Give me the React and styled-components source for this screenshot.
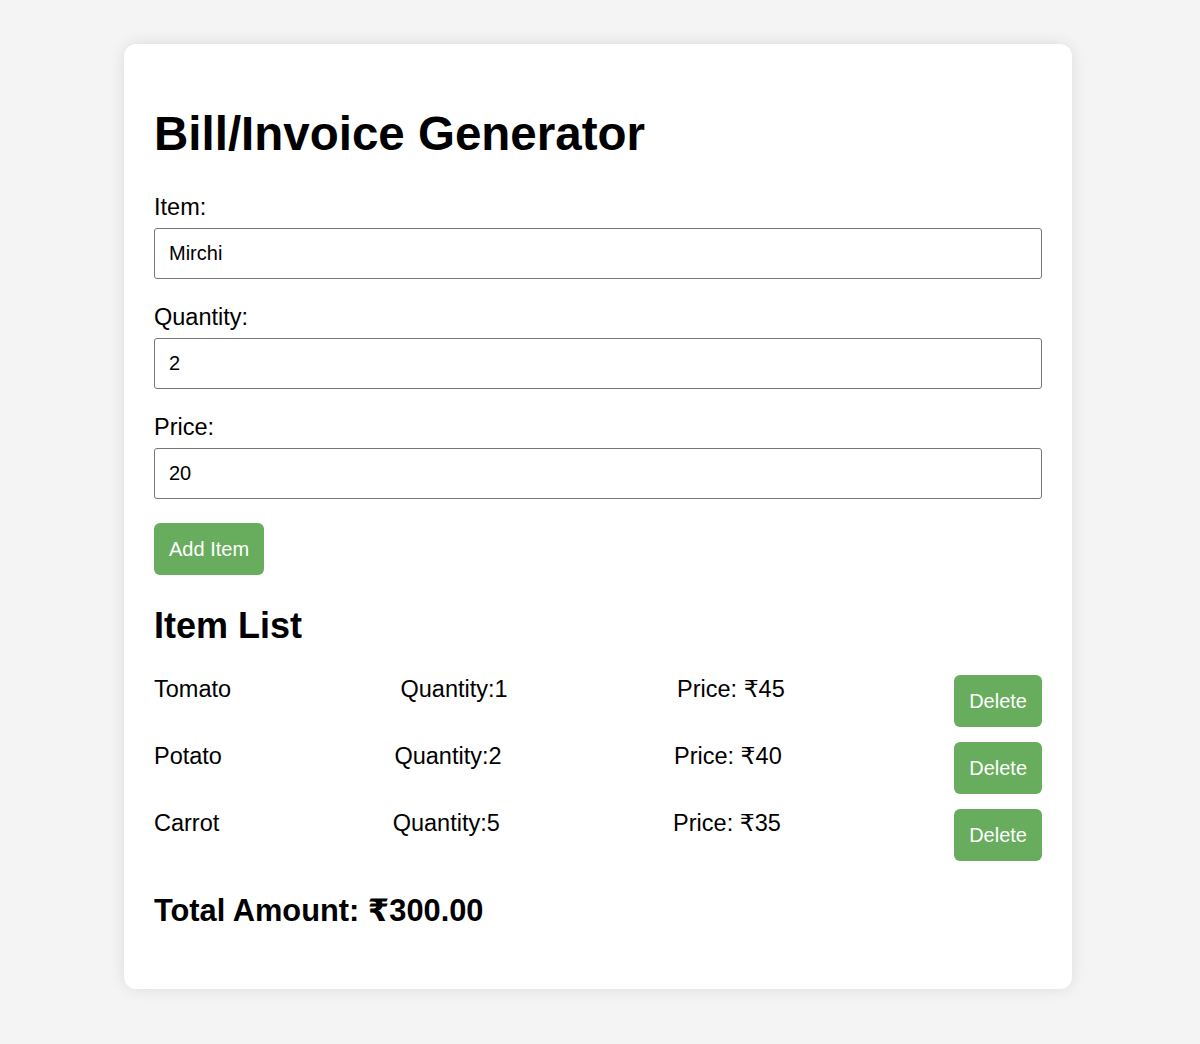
import React, { useState } from 'react';
import styled, { createGlobalStyle } from 'styled-components';

const GlobalStyle = createGlobalStyle`
    body {
        margin: 0;
        background-color: #f4f4f4;
        font-family: "Liberation Sans", Arial, "DejaVu Sans", sans-serif;
        color: #000;
    }
`;

const Card = styled.div`
    width: 948px;
    box-sizing: border-box;
    margin: 44px 0 55px calc(50% - 476px);
    padding: 30px;
    background-color: #fff;
    border-radius: 12px;
    box-shadow: 0 0 15px rgba(0, 0, 0, 0.1);
`;

const Title = styled.h1`
    font-size: 47.5px;
    font-weight: bold;
    margin: 32px 0;
`;

const Label = styled.label`
    display: block;
    font-size: 23.5px;
    line-height: 28px;
    margin-bottom: 7px;
`;

const Input = styled.input`
    display: block;
    width: 100%;
    height: 51px;
    box-sizing: border-box;
    padding: 0 14px;
    margin-bottom: 24px;
    font-family: inherit;
    font-size: 20px;
    color: #000;
    border: 1px solid #767676;
    border-radius: 3px;
`;

const Button = styled.button`
    height: 52px;
    padding: 0 15px;
    font-family: inherit;
    font-size: 20px;
    color: #fff;
    background-color: #68ad5e;
    border: none;
    border-radius: 6px;
    cursor: pointer;
`;

const SubTitle = styled.h2`
    font-size: 36px;
    font-weight: bold;
    margin: 30px 0 28px;
`;

const List = styled.ul`
    list-style: none;
    margin: 0;
    padding: 0;
`;

const Row = styled.li`
    display: flex;
    justify-content: space-between;
    align-items: flex-start;
    font-size: 23.5px;
    line-height: 28px;
    margin-bottom: 15px;
`;

const Total = styled.h3`
    font-size: 30.8px;
    font-weight: bold;
    margin: 31px 0 30px;
`;

const initialItems = [
    { name: 'Tomato', qty: 1, price: 45 },
    { name: 'Potato', qty: 2, price: 40 },
    { name: 'Carrot', qty: 5, price: 35 },
];

const App = () => {
    const [items, setItems] = useState(initialItems);
    const [item, setItem] = useState('Mirchi');
    const [qty, setQty] = useState('2');
    const [price, setPrice] = useState('20');

    const total = items.reduce((sum, i) => sum + i.qty * i.price, 0);

    const addItem = () => {
        if (!item) return;
        setItems([...items, { name: item, qty: Number(qty), price: Number(price) }]);
    };

    return (
        <>
            <GlobalStyle />
            <Card>
                <Title>Bill/Invoice Generator</Title>
                <Label>Item:</Label>
                <Input value={item} onChange={(e) => setItem(e.target.value)} />
                <Label>Quantity:</Label>
                <Input value={qty} onChange={(e) => setQty(e.target.value)} />
                <Label>Price:</Label>
                <Input value={price} onChange={(e) => setPrice(e.target.value)} />
                <Button onClick={addItem}>Add Item</Button>
                <SubTitle>Item List</SubTitle>
                <List>
                    {items.map((i, idx) => (
                        <Row key={idx}>
                            <span>{i.name}</span>
                            <span>Quantity:{i.qty}</span>
                            <span>Price: ₹{i.price}</span>
                            <Button onClick={() => setItems(items.filter((_, k) => k !== idx))}>
                                Delete
                            </Button>
                        </Row>
                    ))}
                </List>
                <Total>Total Amount: ₹{total.toFixed(2)}</Total>
            </Card>
        </>
    );
};

export default App;
